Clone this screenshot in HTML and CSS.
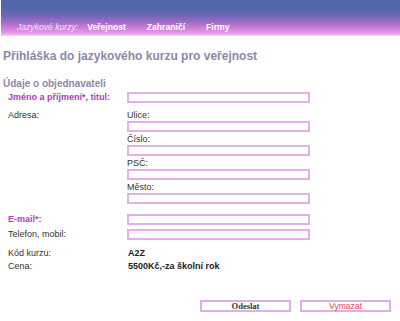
FILE: index.html
```html
<!DOCTYPE html>
<html lang="cs">
<head>
<meta charset="utf-8">
<title>Přihláška do jazykového kurzu pro veřejnost</title>
<link rel="stylesheet" href="styles.css">
</head>
<body>
<div class="header">
  <div class="nav">
    <span class="nav-label">Jazykové kurzy:</span>
    <a class="nav-link">Veřejnost</a>
    <a class="nav-link">Zahraničí</a>
    <a class="nav-link">Firmy</a>
  </div>
</div>
<h1 class="title">Přihláška do jazykového kurzu pro veřejnost</h1>
<h2 class="subtitle">Údaje o objednavateli</h2>
<form class="form">
  <div class="label req">Jméno a příjmení*, titul:</div>
  <div class="field"><input class="inp" type="text"></div>

  <div class="label addr">Adresa:</div>
  <div class="field stack">
    <div class="sublabel">Ulice:</div>
    <input class="inp" type="text">
    <div class="sublabel">Číslo:</div>
    <input class="inp" type="text">
    <div class="sublabel">PSČ:</div>
    <input class="inp" type="text">
    <div class="sublabel">Město:</div>
    <input class="inp" type="text">
  </div>

  <div class="label req gap-top">E-mail*:</div>
  <div class="field gap-top"><input class="inp" type="text"></div>

  <div class="label">Telefon, mobil:</div>
  <div class="field"><input class="inp" type="text"></div>

  <div class="label text-row first-text">Kód kurzu:</div>
  <div class="value text-row first-text">A2Z</div>

  <div class="label text-row">Cena:</div>
  <div class="value text-row">5500Kč,-za školní rok</div>
</form>
<div class="buttons">
  <button class="btn send" type="button">Odeslat</button>
  <button class="btn clear" type="button">Vymazat</button>
</div>
</body>
</html>
```
FILE: styles.css
```css
html, body {
  margin: 0;
  padding: 0;
  background: #ffffff;
}
body {
  font-family: "Liberation Sans", Arial, sans-serif;
  width: 400px;
  height: 321px;
  overflow: hidden;
}
.header {
  height: 36px;
  margin-left: 1px;
  background: linear-gradient(to bottom, #4e66aa 0%, #5566ad 26%, #7066b8 44%, #9a6cc6 60%, #c47ad6 74%, #dc8ce0 86%, #e9a4ea 94%, #f6d6f6 100%);
  display: flex;
  align-items: flex-end;
}
.nav {
  display: flex;
  align-items: center;
  height: 12px;
  margin-bottom: 3px;
  padding-left: 16px;
  font-size: 8.6px;
  color: #ffffff;
}
.nav-label {
  font-style: italic;
  color: #efe4f6;
  margin-right: 9px;
}
.nav-link {
  font-weight: bold;
  margin-right: 21px;
}
.title {
  margin: 13px 0 0 3px;
  font-size: 12px;
  line-height: 14px;
  font-weight: bold;
  color: #8d88a9;
}
.subtitle {
  margin: 15px 0 0 3px;
  font-size: 10px;
  line-height: 12px;
  font-weight: bold;
  color: #8d88a9;
}
.form {
  margin: 2px 0 0 8px;
  display: grid;
  grid-template-columns: 119px 183px;
  row-gap: 4px;
  font-size: 9px;
  color: #333333;
}
.label {
  display: flex;
  align-items: center;
  min-height: 11px;
  line-height: 11px;
}
.label.addr {
  align-items: flex-start;
  padding-top: 2px;
  line-height: 13px;
}
.req {
  color: #b03cbf;
  font-weight: bold;
}
.field {
  display: flex;
  flex-direction: column;
}
.stack {
  padding-top: 1px;
}
.sublabel {
  line-height: 13px;
  height: 13px;
  padding-top: 1px;
  box-sizing: border-box;
}
.inp {
  display: block;
  box-sizing: border-box;
  width: 183px;
  height: 11px;
  margin: 0;
  padding: 0;
  border: 2px solid #e3b0ea;
  background: #ffffff;
  outline: none;
}
.gap-top {
  margin-top: 6px;
}
.text-row {
  line-height: 13px;
  height: 13px;
  margin-top: -4px;
}
.first-text {
  margin-top: 3px;
}
.value {
  font-weight: bold;
  color: #222222;
  padding-left: 1px;
}
.buttons {
  display: flex;
  justify-content: flex-end;
  gap: 9px;
  margin-top: 27px;
  padding-right: 9px;
}
.btn {
  box-sizing: border-box;
  width: 91px;
  height: 12px;
  margin: 0;
  padding: 0;
  border: 2px solid #e0acea;
  background: #ffffff;
  font-size: 8.5px;
  line-height: 8px;
}
.send {
  font-family: "Liberation Serif", "Times New Roman", serif;
  font-weight: bold;
  color: #333333;
}
.clear {
  font-family: "Liberation Sans", Arial, sans-serif;
  color: #f03c50;
}
```
